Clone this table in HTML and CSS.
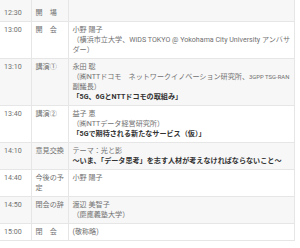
FILE: index.html
```html
<!DOCTYPE html>
<html lang="ja">
<head>
<meta charset="utf-8">
<link rel="stylesheet" href="styles.css">
</head>
<body>
<table class="schedule">
  <colgroup><col class="c-time"><col class="c-item"><col class="c-detail"></colgroup>
  <tr class="first">
    <td>12:30</td><td>開　場</td><td></td>
  </tr>
  <tr>
    <td>13:00</td><td>開　会</td>
    <td>小野 陽子<br>（横浜市立大学、WiDS TOKYO @ Yokohama City University アンバサダー）</td>
  </tr>
  <tr>
    <td>13:10</td><td>講演①</td>
    <td>永田 聡<br>（㈱NTTドコモ　ネットワークイノベーション研究所、<span class="org">3GPP TSG-RAN</span> 副議長）<br><b>「5G、6GとNTTドコモの取組み」</b></td>
  </tr>
  <tr>
    <td>13:40</td><td>講演②</td>
    <td>益子 恵<br>（㈱NTTデータ経営研究所）<br><b>「5Gで期待される新たなサービス（仮）」</b></td>
  </tr>
  <tr>
    <td>14:10</td><td>意見交換</td>
    <td>テーマ：光と影<br><b>〜いま、「データ思考」を志す人材が考えなければならないこと〜</b></td>
  </tr>
  <tr>
    <td>14:40</td><td>今後の予定</td>
    <td>小野 陽子</td>
  </tr>
  <tr>
    <td>14:50</td><td>閉会の辞</td>
    <td>渡辺 美智子<br>（慶應義塾大学）</td>
  </tr>
  <tr>
    <td>15:00</td><td>閉　会</td>
    <td>(敬称略)</td>
  </tr>
</table>
</body>
</html>
```
FILE: styles.css
```css
html, body {
  margin: 0;
  background: #ffffff;
}
.schedule {
  border-collapse: collapse;
  table-layout: fixed;
  width: 295px;
  font-family: Roboto, "Noto Sans CJK JP", sans-serif;
  font-size: 7.1px;
  line-height: 10px;
  color: #707070;
  line-break: loose;
}
.c-time { width: 31px; }
.c-item { width: 37px; }
.schedule td {
  padding: 3px 3px 3px 4px;
  vertical-align: top;
  border-right: 1px solid #e6e6e6;
  border-bottom: 1px solid #e6e6e6;
}
.schedule td:last-child { padding-right: 2px; }
.schedule tr:nth-child(odd) { background: #f7f7f7; }
.schedule tr:nth-child(even) { background: #ffffff; }
.schedule tr.first td { padding-top: 8px; }
.schedule .org {
  font-size: 5.9px;
  white-space: nowrap;
}
.schedule b {
  font-weight: 700;
  color: #333333;
}
```
